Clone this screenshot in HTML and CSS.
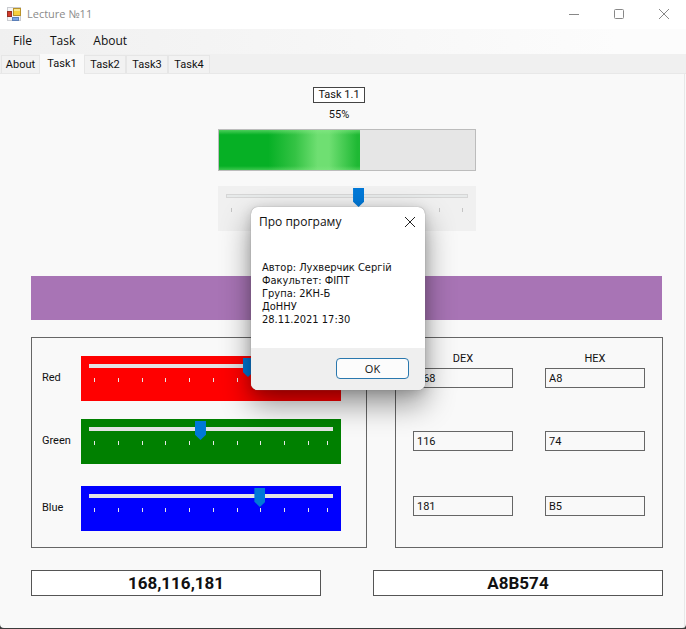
FILE: index.html
```html
<!DOCTYPE html>
<html lang="uk">
<head>
<meta charset="utf-8">
<title>Lecture №11</title>
<link rel="stylesheet" href="styles.css">
</head>
<body>
<div class="window">
  <header class="titlebar">
    <svg class="app-icon" width="14" height="14" viewBox="0 0 14 14" aria-hidden="true">
      <rect x="0.5" y="0.5" width="13" height="13" fill="#f4f4f6" stroke="#c9cbd0"/>
      <rect x="6.5" y="1.5" width="7" height="7" fill="#f7cf3c" stroke="#b8922a"/>
      <rect x="7" y="2" width="6" height="2" fill="#fbe68a"/>
      <rect x="0.5" y="4.5" width="4" height="5" fill="#d23a2a" stroke="#963024"/>
      <rect x="5.5" y="10.5" width="6" height="3" fill="#7aa5e6" stroke="#5b7fb8"/>
    </svg>
    <span class="window-title">Lecture №11</span>
    <div class="window-buttons">
      <button type="button" aria-label="Minimize"><svg width="12" height="12" viewBox="0 0 12 12"><path d="M1 6.5h10" stroke="#888"/></svg></button>
      <button type="button" aria-label="Maximize"><svg width="12" height="12" viewBox="0 0 12 12"><rect x="1.5" y="1.5" width="9" height="9" rx="1" fill="none" stroke="#888"/></svg></button>
      <button type="button" aria-label="Close"><svg width="12" height="12" viewBox="0 0 12 12"><path d="M1 1l10 10M11 1L1 11" stroke="#888"/></svg></button>
    </div>
  </header>
  <nav class="menu">
    <button type="button">File</button>
    <button type="button">Task</button>
    <button type="button">About</button>
  </nav>
  <div class="tabs" role="tablist">
    <button type="button" role="tab">About</button>
    <button type="button" role="tab" class="active" aria-selected="true">Task1</button>
    <button type="button" role="tab">Task2</button>
    <button type="button" role="tab">Task3</button>
    <button type="button" role="tab">Task4</button>
  </div>
  <main class="page">
    <section class="task">
      <div class="captions">
        <label class="task-title" id="task-title" for="level">Task 1.1</label>
        <output class="percent" for="level">55%</output>
      </div>
      <div class="progress" role="progressbar" aria-labelledby="task-title" aria-valuenow="55"><div class="progress-fill" style="width:55%"></div></div>
      <div class="slider level">
        <input type="range" id="level" min="0" max="100" value="55">
        <div class="ticks"><i></i><i></i><i></i><i></i><i></i><i></i><i></i><i></i><i></i><i></i><i></i></div>
      </div>
    </section>
    <div class="swatch" style="background:rgb(168,116,181)"></div>
    <div class="panels">
      <section class="panel channels">
        <label id="red" for="r">Red</label>
        <div class="slider red"><input type="range" id="r" min="0" max="255" value="168">
          <div class="ticks"><i></i><i></i><i></i><i></i><i></i><i></i><i></i><i></i><i></i><i></i><i></i></div></div>
        <label id="green" for="g">Green</label>
        <div class="slider green"><input type="range" id="g" min="0" max="255" value="116">
          <div class="ticks"><i></i><i></i><i></i><i></i><i></i><i></i><i></i><i></i><i></i><i></i><i></i></div></div>
        <label id="blue" for="b">Blue</label>
        <div class="slider blue"><input type="range" id="b" min="0" max="255" value="181">
          <div class="ticks"><i></i><i></i><i></i><i></i><i></i><i></i><i></i><i></i><i></i><i></i><i></i></div></div>
      </section>
      <section class="panel values">
        <span id="dex">DEX</span><span id="hex">HEX</span>
        <input type="text" value="168" aria-labelledby="red dex">
        <input type="text" value="A8" aria-labelledby="red hex">
        <input type="text" value="116" aria-labelledby="green dex">
        <input type="text" value="74" aria-labelledby="green hex">
        <input type="text" value="181" aria-labelledby="blue dex">
        <input type="text" value="B5" aria-labelledby="blue hex">
      </section>
    </div>
    <div class="results">
      <input type="text" value="168,116,181" aria-labelledby="dex">
      <input type="text" value="A8B574" aria-labelledby="hex">
    </div>
  </main>
  <section class="dialog" role="dialog" aria-labelledby="dialog-title">
    <header class="dialog-head">
      <span id="dialog-title">Про програму</span>
      <button type="button" aria-label="Close"><svg width="12" height="12" viewBox="0 0 12 12"><path d="M1 1l10 10M11 1L1 11" stroke="#222"/></svg></button>
    </header>
    <p>Автор: Лухверчик Сергій<br>Факультет: ФІПТ<br>Група: 2КН-Б<br>ДоННУ<br>28.11.2021 17:30</p>
    <footer><button type="button">OK</button></footer>
  </section>
</div>
</body>
</html>
```
FILE: styles.css
```css
* { box-sizing: border-box; }
body {
  margin: 0;
  background: #3c3c3c;
  color: #111;
  font: 11px/14px Roboto, "Liberation Sans", sans-serif;
}
button, input { font: inherit; color: inherit; }
button { padding: 0; border: 0; background: none; }
svg { display: block; }

.window {
  position: relative;
  display: flex;
  flex-direction: column;
  min-height: calc(100vh - 1px);
  border-radius: 0 0 4px 4px;
  background: #f9f9f9;
  overflow: hidden;
}

.titlebar, .menu, .dialog { font-family: "Open Sans", "Noto Sans", sans-serif; }
.titlebar { display: flex; align-items: center; height: 29px; padding: 0 0 2px 7px; background: #fff; color: #8a8a8a; }
.window-title { margin-left: 6px; }
.window-buttons { display: flex; margin-left: auto; }
.window-buttons button { display: grid; place-items: center; width: 45px; height: 27px; }

.menu { display: flex; height: 25px; padding: 0 4px 1px; background: linear-gradient(90deg, #f0f0f0, #fcfcfc 90%); font-size: 12px; }
.menu button { padding: 0 9px; }

.tabs { display: flex; align-items: flex-end; height: 20px; padding-left: 1px; background: #f0f0f0; border-bottom: 1px solid #e8e8e8; }
.tabs button { width: 42px; height: 18px; border: 1px solid #e6e6e6; border-bottom: 0; background: #f2f2f2; }
.tabs button:first-child { width: 39px; }
.tabs .active { z-index: 1; width: 44px; height: 20px; margin-bottom: -1px; padding-bottom: 2px; border-color: #f9f9f9; background: #f9f9f9; }

.page { flex: 1; padding: 13px 21px 32px 31px; border-right: 1px solid #e8e8e8; margin-right: 1px; }
.task { width: 258px; margin: 0 auto; }
.captions { display: flex; flex-direction: column; align-items: center; gap: 5px; padding-right: 16px; }
.task-title { padding: 0 4px; border: 1px solid #444; background: #fff; }
.percent { display: block; }
.progress { height: 42px; margin-top: 7px; border: 1px solid #bcbcbc; background: #e6e6e6; }
.progress-fill {
  height: 100%;
  background:
    linear-gradient(#8aea8a88, transparent 12%, transparent 90%, #8aea8a66),
    linear-gradient(90deg, #06b025 35%, #34c344 54%, #6fdf72 70%, #6fdf72 78%, #1fb934 98%);
}

.slider { height: 45px; padding: 2px 8px 0; }
.slider input {
  display: block;
  width: 100%;
  height: 19px;
  margin: 0;
  appearance: none;
  background: linear-gradient(#e3e3e3, #e3e3e3) 0 6px / 100% 4px no-repeat;
}
.slider input::-webkit-slider-thumb {
  appearance: none;
  width: 11px;
  height: 19px;
  background: #0078d7;
  clip-path: polygon(0 0, 100% 0, 100% 72%, 50% 100%, 0 72%);
}
.ticks { display: grid; grid-template-columns: repeat(9, 26fr) 21fr 1px; height: 4px; margin: 1px 5px 0; }
.ticks i { width: 1px; background: #e8e8e8; }
.level { margin-top: 15px; background: #f0f0f0; }
.level input { background: linear-gradient(#e7eaea, #e7eaea) 1px 7px / calc(100% - 2px) 2px no-repeat, linear-gradient(#d6d6d6, #d6d6d6) 0 6px / 100% 4px no-repeat; }
.level .ticks { grid-template-columns: repeat(10, 1fr) 1px; }
.level .ticks i { background: #c4c4c4; }
.red { background: #f00; }
.green { background: #008000; }
.blue { background: #00f; }

.swatch { height: 44px; margin: 45px 1px 0 0; }
.panels { display: grid; grid-template-columns: 336fr 268fr; gap: 28px; margin-top: 17px; }
.panel { display: grid; height: 211px; border: 1px solid #666; }
.channels { grid-template: 63px 67px 45px / 39px 1fr; padding: 18px 25px 0 10px; }
.channels label { align-self: start; line-height: 43px; }
.values { grid-template: 17px 63px 65px 20px / 1fr 1fr; column-gap: 32px; padding: 13px 17px 0; }
.values span { text-align: center; line-height: 16px; }
.values input { align-self: start; width: 100%; height: 20px; padding: 0 3px; border: 1px solid #666; background: transparent; }
.results { display: grid; grid-template-columns: 1fr 1fr; gap: 52px; margin-top: 22px; }
.results input { width: 100%; height: 26px; padding: 0; border: 1px solid #555; background: #fff; text-align: center; font-size: 17px; font-weight: 700; }

.dialog {
  position: absolute;
  left: 251px;
  top: 207px;
  z-index: 2;
  width: 174px;
  border-radius: 7px;
  background: #fff;
  box-shadow: 0 0 1px #777, 0 14px 30px rgb(0 0 0 / 42%), 0 2px 12px rgb(0 0 0 / 15%);
}
.dialog-head { display: flex; align-items: center; justify-content: space-between; height: 29px; padding: 0 9px 0 8px; font-size: 12px; }
.dialog p { height: 112px; margin: 0; padding: 25px 11px 0; font-family: "DejaVu Sans Condensed", "DejaVu Sans", sans-serif; line-height: 13px; white-space: nowrap; }
.dialog footer { display: flex; justify-content: flex-end; height: 42px; padding: 10px 16px 0 0; border-radius: 0 0 7px 7px; background: #efefef; }
.dialog footer button { width: 73px; height: 21px; border: 1px solid #2a78ae; border-radius: 4px; background: #fcfcfc; }
```
